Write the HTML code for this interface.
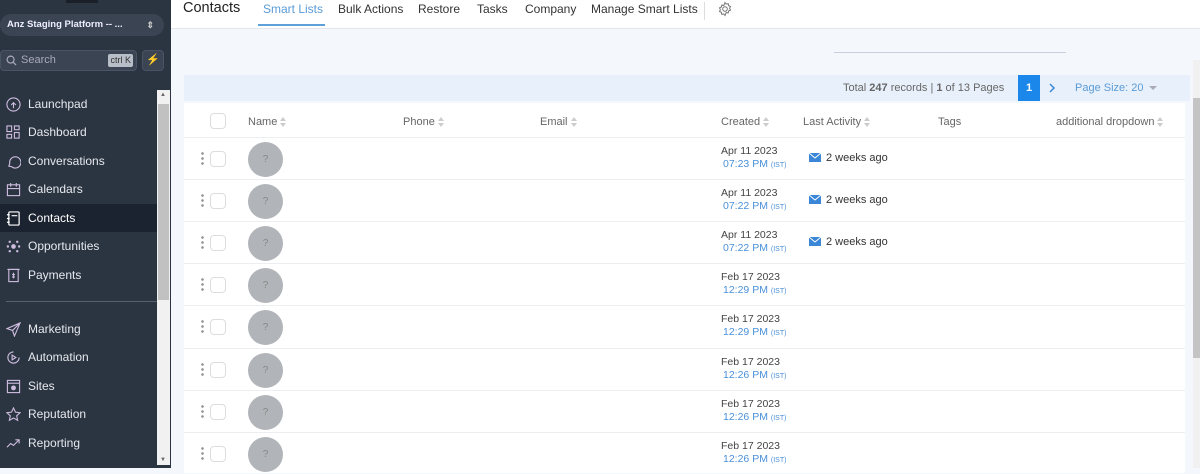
<!DOCTYPE html>
<html><head><meta charset="utf-8"><style>
*{box-sizing:border-box;margin:0;padding:0}
body{width:1200px;height:468px;overflow:hidden;font-family:"Liberation Sans",sans-serif;background:#f4f7fb;position:relative}
#sb{position:absolute;left:0;top:0;width:171px;height:468px;background:#2b3441}
.acct{position:absolute;left:0;top:14px;width:164px;height:22px;background:#3a4453;border-radius:11px;color:#eef;font-size:9.5px;font-weight:bold;line-height:22px;padding-left:7px}
.acct span{position:absolute;right:10px;top:0;font-size:9px;color:#ccc}
.srch{position:absolute;left:0;top:50px;width:137px;height:21px;background:#3a4453;border:1px solid #4a5465;border-radius:4px;color:#aab;font-size:11px;line-height:19px;padding-left:20px}
.srch i{position:absolute;right:3px;top:3px;background:#b8bec8;color:#333;font-style:normal;font-size:9px;line-height:13px;padding:0 2px;border-radius:2px}
.bolt{position:absolute;left:142px;top:50px;width:22px;height:21px;background:#3a4453;border:1px solid #4a5465;border-radius:4px;color:#4aa3f5;font-size:11px;text-align:center;line-height:19px}
.nav{position:absolute;left:0;width:157px;height:28px;color:#e6e9ee;font-size:12px;line-height:28px;padding-left:28px}
.nav.act{background:#1c2330;color:#fff}
.nav svg{position:absolute;left:6px;top:7px}
.sep{position:absolute;left:6px;top:301px;width:151px;height:1px;background:#566070}
.sbs{position:absolute;left:157px;top:90px;width:13px;height:375px;background:#f1f1f1}
.sbs b{position:absolute;left:1px;top:14px;width:11px;height:196px;background:#c1c1c1}
#hd{position:absolute;left:171px;top:0;right:0;height:29px;background:#fff;border-bottom:1px solid #e3e6ea}
#hd .t{position:absolute;left:12px;top:0;font-size:14.5px;color:#222}
#hd .tab{position:absolute;top:2px;font-size:12px;color:#333}
.ul{position:absolute;left:87px;top:24px;width:67px;height:2px;background:#5fa0d9}
.bar1{position:absolute;left:834px;top:52px;width:232px;height:1px;background:#ccd}
.pag{position:absolute;left:184px;top:75px;width:1006px;height:26px;background:#e8f1fb;font-size:11px;color:#666}
.tbl{position:absolute;left:184px;top:103px;width:1001px;height:370px;background:#fff}
.th{position:absolute;top:13px;font-size:11px;color:#666}
.srt{display:inline-block;vertical-align:middle;margin-left:3px;width:7px;height:10px;position:relative}
.srt:before,.srt:after{content:"";position:absolute;left:0;border-left:3.5px solid transparent;border-right:3.5px solid transparent}
.srt:before{top:0;border-bottom:4px solid #ccc}.srt:after{bottom:0;border-top:4px solid #ccc}
.row{position:absolute;left:0;width:1001px;height:42px;border-top:1px solid #eceef1}
.dots{position:absolute;left:17px;top:13px;width:3px;height:14px;background:radial-gradient(circle,#999 1.2px,transparent 1.5px) 0 0/3px 5px}
.cb{position:absolute;left:26px;top:13px;width:16px;height:16px;border:1px solid #ddd;border-radius:4px;background:#fff}
.av{position:absolute;left:64px;top:4px;width:35px;height:35px;border-radius:50%;background:#b1b4b8;color:#888;font-size:10px;text-align:center;line-height:35px}
.dt{position:absolute;left:537px;top:7px;font-size:10.5px;color:#444;line-height:13px}
.dt span{color:#4a90d9;padding-left:2px}.dt small{font-size:7px;color:#4a90d9}
.la{position:absolute;left:625px;top:14px;font-size:11px;color:#333}
.la svg{vertical-align:-1px;margin-right:5px}
.rsb{position:absolute;left:1193px;top:60px;width:7px;height:408px;background:#f1f1f1}
.rsb b{position:absolute;left:0;top:38px;width:7px;height:260px;background:#c4c4c4}
</style></head><body>
<div id="sb">
<div style="position:absolute;left:66px;top:0;width:32px;height:3px;background:#1a1f28"></div>
<div class="acct">Anz Staging Platform -- ...<span>⇕</span></div>
<div class="srch"><svg style="position:absolute;left:5px;top:4px" width="11" height="11" viewBox="0 0 12 12" fill="none" stroke="#aab" stroke-width="1.3"><circle cx="5" cy="5" r="3.8"/><path d="M8 8l3 3"/></svg>Search<i>ctrl K</i></div>
<div class="bolt">⚡</div>
<div class="nav" style="top:90px"><svg width="15" height="15" viewBox="0 0 16 16" fill="none" stroke="#cbd" stroke-width="1.2"><circle cx="8" cy="8" r="7"/><path d="M8 12V6M5.5 8.5L8 6l2.5 2.5"/></svg>Launchpad</div>
<div class="nav" style="top:118px"><svg width="15" height="15" viewBox="0 0 16 16" fill="none" stroke="#cbd" stroke-width="1.2"><rect x="1" y="1" width="5" height="6"/><rect x="9" y="1" width="5" height="4"/><rect x="1" y="10" width="5" height="4"/><rect x="9" y="8" width="5" height="6"/></svg>Dashboard</div>
<div class="nav" style="top:147px"><svg width="15" height="15" viewBox="0 0 16 16" fill="none" stroke="#cbd" stroke-width="1.2"><path d="M3 13l1-3A6 6 0 1 1 6 13.5z"/></svg>Conversations</div>
<div class="nav" style="top:175px"><svg width="15" height="15" viewBox="0 0 16 16" fill="none" stroke="#cbd" stroke-width="1.2"><rect x="1.5" y="3" width="13" height="11.5"/><path d="M1.5 7h13M5 1v4M11 1v4"/></svg>Calendars</div>
<div class="nav act" style="top:204px"><svg width="15" height="15" viewBox="0 0 16 16" fill="none" stroke="#fff" stroke-width="1.3"><rect x="3" y="1" width="11" height="14" rx="1"/><path d="M1 4h3M1 8h3M1 12h3M6 5h6"/></svg>Contacts</div>
<div class="nav" style="top:232px"><svg width="15" height="15" viewBox="0 0 16 16" fill="#cbd"><circle cx="8" cy="8" r="2.5"/><circle cx="2" cy="8" r="1.3"/><circle cx="14" cy="8" r="1.3"/><circle cx="4" cy="3" r="1.3"/><circle cx="12" cy="3" r="1.3"/><circle cx="4" cy="13" r="1.3"/><circle cx="12" cy="13" r="1.3"/></svg>Opportunities</div>
<div class="nav" style="top:261px"><svg width="15" height="15" viewBox="0 0 16 16" fill="none" stroke="#cbd" stroke-width="1.2"><rect x="3" y="1.5" width="10" height="13"/><path d="M1.5 1.5h13M8 5v6M6.5 7h3M6.5 9.5h3"/></svg>Payments</div>
<div class="sep"></div>
<div class="nav" style="top:315px"><svg width="15" height="15" viewBox="0 0 16 16" fill="none" stroke="#cbd" stroke-width="1.2"><path d="M15 1L1 7l6 2 2 6z M7 9l8-8"/></svg>Marketing</div>
<div class="nav" style="top:343px"><svg width="15" height="15" viewBox="0 0 16 16" fill="none" stroke="#cbd" stroke-width="1.2"><path d="M14 8A6 6 0 1 1 8 2"/><path d="M6.5 5.5v5l4-2.5z"/></svg>Automation</div>
<div class="nav" style="top:372px"><svg width="15" height="15" viewBox="0 0 16 16" fill="none" stroke="#cbd" stroke-width="1.2"><rect x="1.5" y="1.5" width="13" height="13"/><path d="M1.5 4.5h13"/><circle cx="8" cy="9.5" r="2" fill="#cbd"/></svg>Sites</div>
<div class="nav" style="top:400px"><svg width="15" height="15" viewBox="0 0 16 16" fill="none" stroke="#cbd" stroke-width="1.2"><path d="M8 1l2.1 4.5 4.9.6-3.6 3.3 1 4.8L8 11.8 3.6 14.2l1-4.8L1 6.1l4.9-.6z"/></svg>Reputation</div>
<div class="nav" style="top:429px"><svg width="15" height="15" viewBox="0 0 16 16" fill="none" stroke="#cbd" stroke-width="1.2"><path d="M1 12l4-4 3 2 6-6M10 4h4v4"/></svg>Reporting</div>
<div class="sbs"><b></b><span style="position:absolute;left:3px;top:2px;font-size:6px;color:#666">▲</span><span style="position:absolute;left:3px;bottom:2px;font-size:6px;color:#666">▼</span></div>
</div>
<div id="hd">
<div class="t">Contacts</div>
<div class="tab" style="left:92px;color:#5a9bd6">Smart Lists</div>
<div class="tab" style="left:167px">Bulk Actions</div>
<div class="tab" style="left:247px">Restore</div>
<div class="tab" style="left:306px">Tasks</div>
<div class="tab" style="left:354px">Company</div>
<div class="tab" style="left:420px">Manage Smart Lists</div>
<div style="position:absolute;left:533px;top:2px;width:1px;height:18px;background:#ddd"></div>
<svg style="position:absolute;left:546px;top:1px" width="16" height="16" viewBox="0 0 16 16" fill="none" stroke="#777" stroke-width="1"><circle cx="8" cy="8" r="2.3"/><path d="M8 1.5l1.2 1.6 2-.5.4 2 1.9.9-.9 1.8.9 1.8-1.9.9-.4 2-2-.5L8 14.5l-1.2-1.6-2 .5-.4-2-1.9-.9.9-1.8-.9-1.8 1.9-.9.4-2 2 .5z"/></svg>
<div class="ul"></div>
</div>
<div class="bar1"></div>
<div class="pag">
<div style="position:absolute;left:659px;top:7px">Total <b>247</b> records | <b>1</b> of 13 Pages</div>
<div style="position:absolute;left:834px;top:0;width:22px;height:26px;background:#1b87ea;color:#fff;text-align:center;line-height:26px;font-weight:bold">1</div>
<svg style="position:absolute;left:864px;top:8px" width="8" height="10" viewBox="0 0 8 10" fill="none" stroke="#3b86d6" stroke-width="1.5"><path d="M2 1l4 4-4 4"/></svg>
<div style="position:absolute;left:891px;top:7px;color:#5a9bd6">Page Size: 20</div>
<div style="position:absolute;left:965px;top:11px;border-left:4px solid transparent;border-right:4px solid transparent;border-top:4px solid #aab"></div>
</div>
<div class="tbl">
<div class="cb" style="top:10px"></div>
<div class="th" style="left:64px">Name<i class="srt"></i></div>
<div class="th" style="left:219px">Phone<i class="srt"></i></div>
<div class="th" style="left:356px">Email<i class="srt"></i></div>
<div class="th" style="left:537px">Created<i class="srt"></i></div>
<div class="th" style="left:619px">Last Activity<i class="srt"></i></div>
<div class="th" style="left:754px">Tags</div>
<div class="th" style="left:872px">additional dropdown<i class="srt"></i></div>
<div class="row" style="top:34px"><div class="dots"></div><div class="cb"></div><div class="av">?</div><div class="dt">Apr 11 2023<br><span>07:23 PM <small>(IST)</small></span></div><div class="la"><svg width="12" height="9" viewBox="0 0 12 9"><rect width="12" height="9" fill="#3b86d6"/><path d="M0 0l6 5 6-5" fill="none" stroke="#fff" stroke-width="1"/></svg>2 weeks ago</div></div>
<div class="row" style="top:76px"><div class="dots"></div><div class="cb"></div><div class="av">?</div><div class="dt">Apr 11 2023<br><span>07:22 PM <small>(IST)</small></span></div><div class="la"><svg width="12" height="9" viewBox="0 0 12 9"><rect width="12" height="9" fill="#3b86d6"/><path d="M0 0l6 5 6-5" fill="none" stroke="#fff" stroke-width="1"/></svg>2 weeks ago</div></div>
<div class="row" style="top:118px"><div class="dots"></div><div class="cb"></div><div class="av">?</div><div class="dt">Apr 11 2023<br><span>07:22 PM <small>(IST)</small></span></div><div class="la"><svg width="12" height="9" viewBox="0 0 12 9"><rect width="12" height="9" fill="#3b86d6"/><path d="M0 0l6 5 6-5" fill="none" stroke="#fff" stroke-width="1"/></svg>2 weeks ago</div></div>
<div class="row" style="top:160px"><div class="dots"></div><div class="cb"></div><div class="av">?</div><div class="dt">Feb 17 2023<br><span>12:29 PM <small>(IST)</small></span></div></div>
<div class="row" style="top:202px"><div class="dots"></div><div class="cb"></div><div class="av">?</div><div class="dt">Feb 17 2023<br><span>12:29 PM <small>(IST)</small></span></div></div>
<div class="row" style="top:245px"><div class="dots"></div><div class="cb"></div><div class="av">?</div><div class="dt">Feb 17 2023<br><span>12:26 PM <small>(IST)</small></span></div></div>
<div class="row" style="top:287px"><div class="dots"></div><div class="cb"></div><div class="av">?</div><div class="dt">Feb 17 2023<br><span>12:26 PM <small>(IST)</small></span></div></div>
<div class="row" style="top:329px"><div class="dots"></div><div class="cb"></div><div class="av">?</div><div class="dt">Feb 17 2023<br><span>12:26 PM <small>(IST)</small></span></div></div>
</div>
<div class="rsb"><b></b></div>
</body></html>
